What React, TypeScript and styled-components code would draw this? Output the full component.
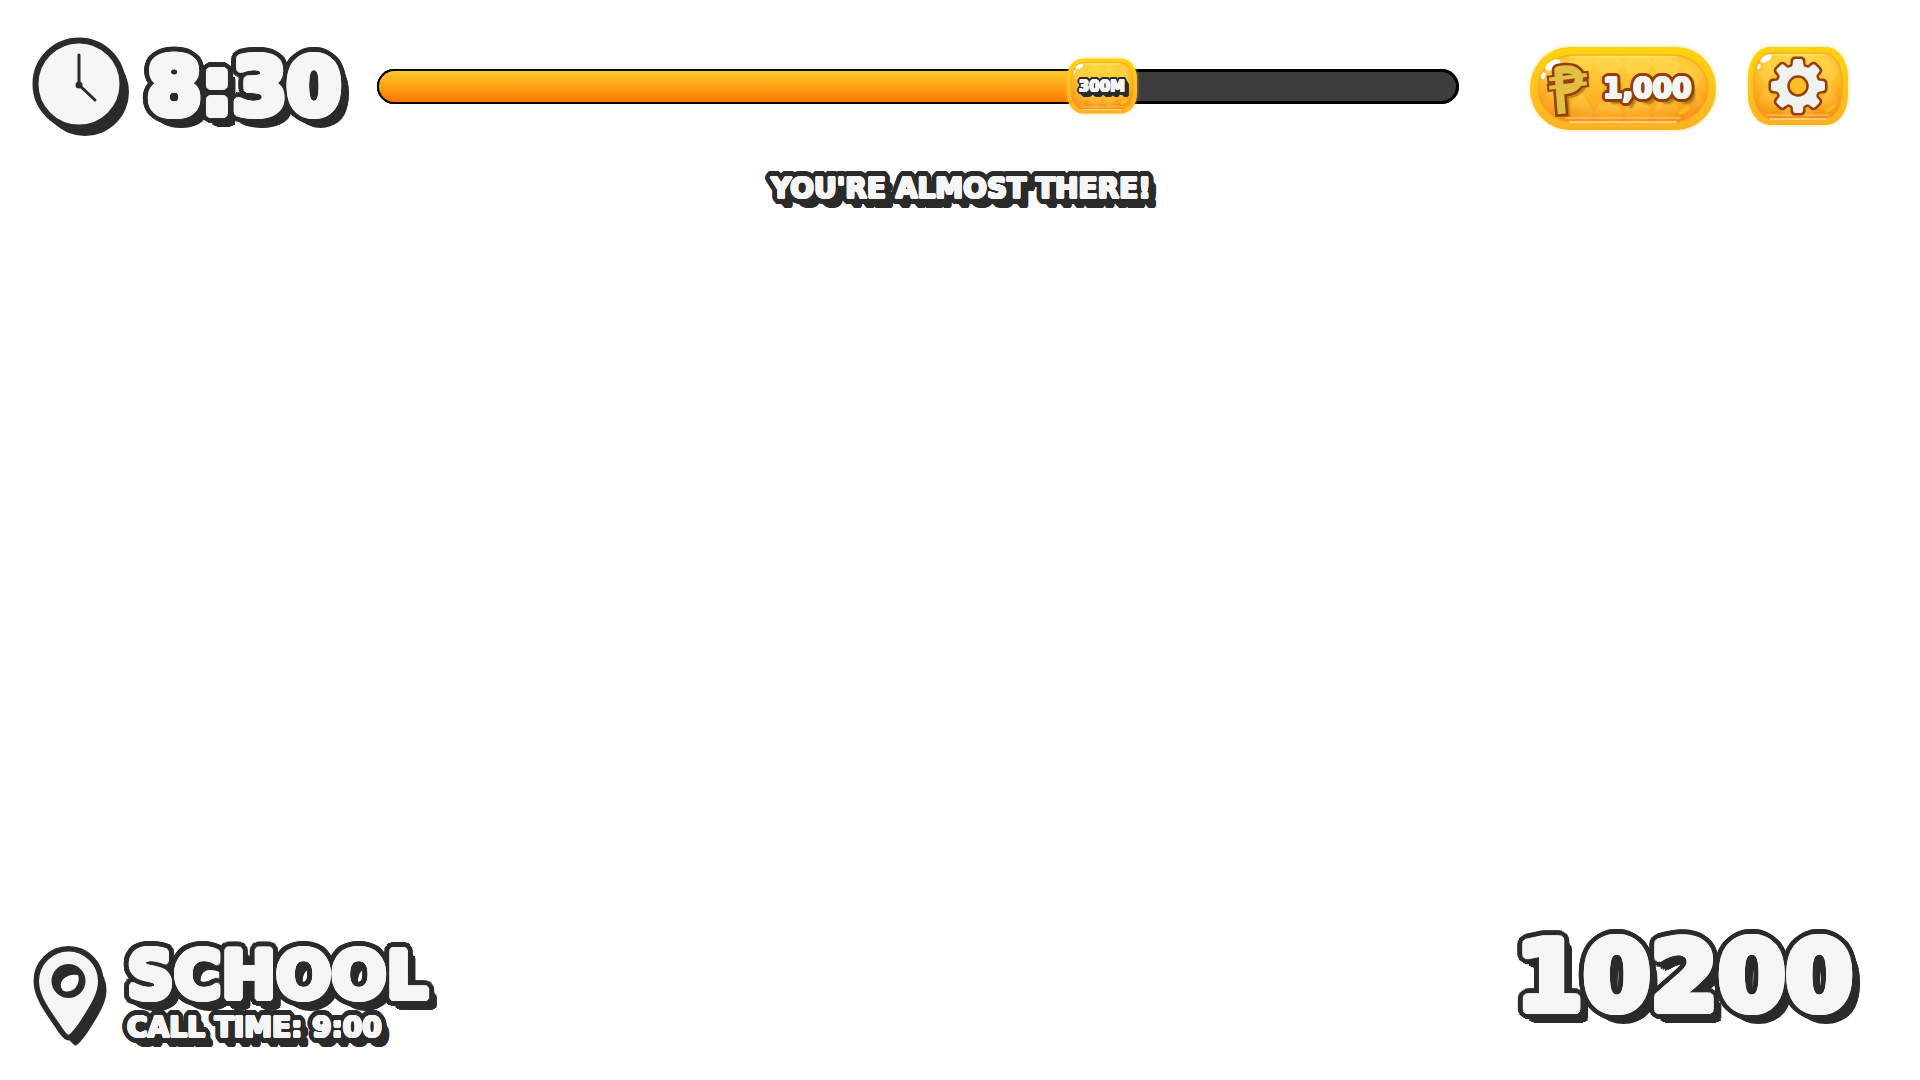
import React, { useId } from "react";
import styled, { createGlobalStyle, css } from "styled-components";

const INK = "#2b2b2b";
const PAPER = "#f5f5f5";
const BROWN = "#943f08";

const GlobalStyle = createGlobalStyle`
  * { box-sizing: border-box; }
  body { margin: 0; background: #fff; font-family: "DejaVu Sans", "Liberation Sans", sans-serif; }
`;

/* A ring of hard shadows that swells a glyph by the given radius. */
const ring = (radius: number, color: string, dx = 0, dy = 0, steps = 16) =>
  Array.from({ length: steps }, (_, i) => {
    const a = (i / steps) * Math.PI * 2;
    return `${(dx + Math.cos(a) * radius).toFixed(2)}px ${(dy + Math.sin(a) * radius).toFixed(2)}px 0 ${color}`;
  });

/* Rounded letter body, round outline, then the body pushed down and right. */
const bubble = (swell: number, outline: number, depth: number, ink = INK, paper = PAPER) => {
  const layers = ring(swell, paper);
  layers.push(...ring(swell + outline, ink, 0, 0, 32), ...ring(swell + outline / 2, ink));
  for (let i = 1; i <= 4; i++) {
    layers.push(...ring(swell + 1, ink, (depth * 0.85 * i) / 4, (depth * i) / 4, 12));
  }
  return layers.join(", ");
};

const Screen = styled.div`
  min-height: 100vh;
  display: flex;
  flex-direction: column;
  justify-content: space-between;
  padding: 34px 0 32px 32px;
`;

const Header = styled.header`
  display: flex;
  flex-direction: column;
  gap: 35px;
  padding-right: 72px;
`;

const TopBar = styled.div`
  display: flex;
  align-items: center;
`;

const Footer = styled.footer`
  display: flex;
  align-items: flex-start;
  justify-content: space-between;
  padding-right: 67px;
`;

const Cluster = styled.div<{ $top?: boolean }>`
  display: flex;
  align-items: ${({ $top }) => ($top ? "flex-start" : "center")};
  gap: 15px;
`;

const Lines = styled.div`
  display: flex;
  flex-direction: column;
`;

const bubbleSizes = {
  score: css`font-size: 97px; line-height: 74px; text-shadow: ${bubble(4, 5, 8)};`,
  clock: css`font-size: 78px; line-height: 80px; padding-top: 2px; text-shadow: ${bubble(4, 5, 8)};`,
  title: css`font-size: 65px; line-height: 72px; text-shadow: ${bubble(3, 5, 8)};`,
  label: css`font-size: 28px; line-height: 32px; text-shadow: ${bubble(1, 5, 8)};`,
  coins: css`font-size: 28px; line-height: 32px; text-shadow: ${bubble(1, 3, 1, BROWN)}, 5px 6px 2px rgba(120, 90, 10, 0.6);`,
  tag: css`font-size: 15px; line-height: 16px; text-shadow: ${bubble(0.5, 2, 4)};`,
};

const BubbleText = styled.span<{ $size: keyof typeof bubbleSizes }>`
  display: block;
  color: ${PAPER};
  font-weight: 700;
  white-space: nowrap;
  ${({ $size }) => bubbleSizes[$size]}
`;

const Message = styled.p`
  margin: 0;
  padding-left: 42px;
  display: flex;
  justify-content: center;
`;

const Track = styled.div`
  position: relative;
  flex: 1;
  height: 35px;
  margin: 0 71px 0 36px;
  border-radius: 18px;
  background: #3c3c3c;
  box-shadow: inset 0 0 0 3px #000;
`;

const Fill = styled.div`
  height: 100%;
  border: 2px solid #000;
  border-right: 0;
  border-radius: 18px 0 0 18px;
  background: linear-gradient(#fcc928, #ff7800);
`;

const Marker = styled.div`
  position: absolute;
  top: 50%;
  width: 70px;
  height: 55px;
  display: grid;
  place-items: center;
  transform: translate(-50%, -50%);
`;

const Actions = styled.div`
  display: flex;
  align-items: flex-start;
  gap: 32px;
  padding-top: 5px;
`;

const GoldButton = styled.button<{ $pill?: boolean }>`
  position: relative;
  display: flex;
  align-items: center;
  justify-content: ${({ $pill }) => ($pill ? "flex-start" : "center")};
  gap: 13px;
  height: ${({ $pill }) => ($pill ? "83px" : "78px")};
  width: ${({ $pill }) => ($pill ? "186px" : "100px")};
  padding: ${({ $pill }) => ($pill ? "0 0 0 16px" : "0")};
  border: 0;
  background: none;
  font-family: inherit;
  cursor: pointer;
`;

const FaceArt = styled.svg`
  position: absolute;
  inset: 0;
  width: 100%;
  height: 100%;
  overflow: visible;
  filter: drop-shadow(0 0 2px rgba(255, 205, 60, 0.6));
`;

const Above = styled.span`
  position: relative;
  display: flex;
`;

type FaceProps = { w: number; h: number; rx: number; ry: number; rim: number; tile: number };

/* Glossy gold plate: bright rim, diamond-patterned inlay, gleams. */
function GoldFace({ w, h, rx, ry, rim, tile }: FaceProps) {
  const id = useId().replace(/[^a-zA-Z0-9]/g, "");
  const k = h / 80;
  const inner = { x: rim, y: rim, width: w - rim * 2, height: h - rim * 2, rx: rx - rim * 0.6, ry: ry - rim * 0.6 };
  return (
    <FaceArt viewBox={`0 0 ${w} ${h}`} aria-hidden="true">
      <defs>
        <linearGradient id={`${id}rim`} x2="0" y2="1">
          <stop offset="0" stopColor="#ffd30d" />
          <stop offset="0.6" stopColor="#fdc01f" />
          <stop offset="1" stopColor="#fdb124" />
        </linearGradient>
        <linearGradient id={`${id}in`} x2="0" y2="1">
          <stop offset="0" stopColor="#ffd640" />
          <stop offset="0.55" stopColor="#fdb829" />
          <stop offset="1" stopColor="#fba01c" />
        </linearGradient>
        <radialGradient id={`${id}edge`} cx="0.5" cy="0.4" r="0.62">
          <stop offset="0.65" stopColor="#f98a0c" stopOpacity="0" />
          <stop offset="1" stopColor="#f57f08" stopOpacity="0.55" />
        </radialGradient>
        <pattern id={`${id}dia`} width={tile} height={tile * 1.7} patternUnits="userSpaceOnUse" x={w / 2} y={h / 2}>
          <path d={`M${tile / 2} 0L${tile} ${tile * 0.85}L${tile / 2} ${tile * 1.7}L0 ${tile * 0.85}Z`} fill="#ffe46a" opacity="0.24" />
        </pattern>
      </defs>
      <rect width={w} height={h} rx={rx} ry={ry} fill={`url(#${id}rim)`} />
      <rect {...inner} fill={`url(#${id}in)`} />
      <rect {...inner} fill={`url(#${id}dia)`} />
      <rect {...inner} fill={`url(#${id}edge)`} stroke="#f5a01a" strokeOpacity="0.6" strokeWidth={1.5 * k} />
      <path d={`M${rx} ${rim + 2 * k}H${w - rx}`} stroke="#fff0a0" strokeOpacity="0.5" strokeWidth={1.5 * k} />
      <path d={`M${rx * 0.9} ${h - rim - 4 * k}H${w - rx * 0.9}`} stroke="#ffd98a" strokeOpacity="0.45" strokeWidth={2 * k} strokeLinecap="round" />
      <path d={`M${rx} ${h - rim}H${w - rx}`} stroke="#fff1c8" strokeOpacity="0.7" strokeWidth={1.5 * k} strokeLinecap="round" />
      <ellipse cx={w - rx * 0.8} cy={h - rim - 11 * k} rx={6 * k} ry={2.5 * k} fill="#ffc20e" fillOpacity="0.8" transform={`rotate(-35 ${w - rx * 0.8} ${h - rim - 11 * k})`} />
    </FaceArt>
  );
}

const teeth = [0, 45, 90, 135, 180, 225, 270, 315];

function GearIcon() {
  return (
    <svg width="60" height="60" viewBox="-30 -30 60 60" aria-hidden="true">
      <g fill={BROWN}>
        <circle r="23" />
        {teeth.map((a) => <rect key={a} x="-7.5" y="-29.5" width="15" height="16" rx="4.5" transform={`rotate(${a})`} />)}
      </g>
      <g fill="#f1f1f1">
        <circle r="20.5" />
        {teeth.map((a) => <path key={a} d="M-7.5 -18Q-5 -20 -5 -24Q-5 -27 -2.5 -27H2.5Q5 -27 5 -24Q5 -20 7.5 -18Z" transform={`rotate(${a})`} />)}
      </g>
      <circle r="9.5" fill="#fdc022" stroke={BROWN} strokeWidth="2.5" />
    </svg>
  );
}

const pesoLetter = "M14 47L11 8Q28 5 31 14Q33 27 13 28";
const pesoBars = "M4 17L37 13M4 25L37 21";

function PesoIcon() {
  return (
    <svg width="44" height="56" viewBox="-1 -1 43 55" fill="none" strokeLinejoin="round" strokeLinecap="square" aria-hidden="true">
      <path d={pesoLetter} stroke="#8a5c10" strokeOpacity="0.5" strokeWidth="13" transform="translate(2 2)" />
      <g stroke={BROWN}>
        <path d={pesoLetter} strokeWidth="13" />
        <path d={pesoBars} strokeWidth="8" />
      </g>
      <g stroke="#e0bf42">
        <path d={pesoLetter} strokeWidth="8" />
        <path d={pesoBars} strokeWidth="4" />
      </g>
    </svg>
  );
}

const Gleam = styled.svg`
  position: absolute;
  top: 0;
  left: 0;
`;

function Shine({ x, y, size }: { x: number; y: number; size: number }) {
  return (
    <Gleam width="50" height="50" viewBox="0 0 50 50" aria-hidden="true">
      <g transform={`translate(${x} ${y}) scale(${size})`} fill="#fff">
        <ellipse cx="9" cy="5" rx="7" ry="3.5" transform="rotate(-32 9 5)" />
        <ellipse cx="1" cy="14" rx="1.8" ry="3" transform="rotate(18 1 14)" />
      </g>
    </Gleam>
  );
}

function ClockIcon() {
  return (
    <svg width="100" height="104" viewBox="0 0 100 104" aria-hidden="true">
      <g fill={INK}>
        <circle cx="50" cy="54" r="44" />
        <circle cx="53" cy="58" r="44" />
      </g>
      <circle cx="47" cy="50" r="43.5" fill={PAPER} stroke={INK} strokeWidth="6" />
      <path d="M47 51V21M47 51L63 66" stroke={INK} strokeWidth="3" strokeLinecap="round" />
      <circle cx="47" cy="51" r="3.5" fill={INK} />
    </svg>
  );
}

const pinBody = "M36.5 95Q34 94 27 83C15 66 7 54 7 41A29.5 29.5 0 0 1 66 41C66 54 58 66 47 83Q39 94 36.5 95Z";

function PinIcon() {
  return (
    <svg width="80" height="108" viewBox="0 0 80 108" aria-hidden="true">
      <mask id="pinHole">
        <rect width="80" height="108" fill="#fff" />
        <path d="M29 47C27 40 36 33 46 35C49 43 42 54 32 51Q30 50 29 47Z" fill="#000" />
      </mask>
      <g mask="url(#pinHole)">
        <g fill={INK} stroke={INK} strokeWidth="3" strokeLinejoin="round">
          <path d={pinBody} transform="translate(2 3)" />
          <path d={pinBody} transform="translate(4 6)" />
          <path d={pinBody} transform="translate(7 9)" />
        </g>
        <path d={pinBody} fill={PAPER} stroke={INK} strokeWidth="11" strokeLinejoin="round" />
        <path d={pinBody} fill={PAPER} />
        <circle cx="36.5" cy="41" r="17" fill={INK} />
      </g>
    </svg>
  );
}

export default function App() {
  return (
    <Screen>
      <GlobalStyle />
      <Header>
        <TopBar>
          <Cluster>
            <ClockIcon />
            <BubbleText as="time" $size="clock">8:30</BubbleText>
          </Cluster>
          <Track role="progressbar" aria-label="Distance" aria-valuenow={67} aria-valuemin={0} aria-valuemax={100}>
            <Fill style={{ width: "67%" }} />
            <Marker style={{ left: "67%" }}>
              <GoldFace w={70} h={55} rx={16} ry={20} rim={4} tile={15} />
              <Shine x={7} y={5} size={0.6} />
              <Above><BubbleText $size="tag">300M</BubbleText></Above>
            </Marker>
          </Track>
          <Actions>
            <GoldButton $pill type="button">
              <GoldFace w={186} h={83} rx={40} ry={41} rim={8} tile={29} />
              <Shine x={12} y={12} size={1.2} />
              <Above><PesoIcon /></Above>
              <Above><BubbleText $size="coins">1,000</BubbleText></Above>
            </GoldButton>
            <GoldButton type="button" aria-label="Settings">
              <GoldFace w={100} h={78} rx={22} ry={30} rim={6} tile={21} />
              <Shine x={10} y={7} size={0.9} />
              <Above><GearIcon /></Above>
            </GoldButton>
          </Actions>
        </TopBar>
        <Message>
          <BubbleText $size="label">YOU'RE ALMOST THERE!</BubbleText>
        </Message>
      </Header>
      <Footer>
        <Cluster $top>
          <PinIcon />
          <Lines>
            <BubbleText $size="title">SCHOOL</BubbleText>
            <BubbleText $size="label">CALL TIME: 9:00</BubbleText>
          </Lines>
        </Cluster>
        <BubbleText $size="score">10200</BubbleText>
      </Footer>
    </Screen>
  );
}
